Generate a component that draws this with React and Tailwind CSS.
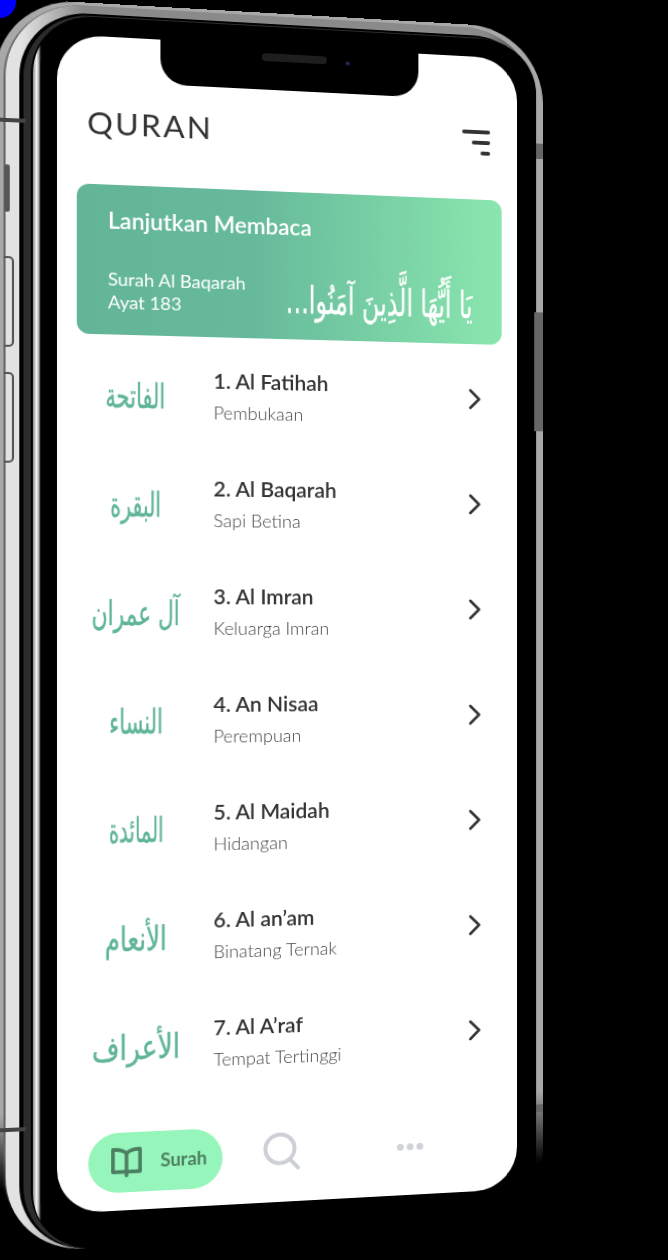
import React from "react";

function solve(A, b) {
  const n = b.length;
  const m = A.map((r, i) => [...r, b[i]]);
  for (let i = 0; i < n; i++) {
    let p = i;
    for (let k = i + 1; k < n; k++) if (Math.abs(m[k][i]) > Math.abs(m[p][i])) p = k;
    [m[i], m[p]] = [m[p], m[i]];
    for (let k = i + 1; k < n; k++) {
      const f = m[k][i] / m[i][i];
      for (let j = i; j <= n; j++) m[k][j] -= f * m[i][j];
    }
  }
  const x = new Array(n).fill(0);
  for (let i = n - 1; i >= 0; i--) {
    let s = m[i][n];
    for (let j = i + 1; j < n; j++) s -= m[i][j] * x[j];
    x[i] = s / m[i][i];
  }
  return x;
}

function matrixFor(src, dst) {
  const A = [];
  const b = [];
  src.forEach(([x, y], i) => {
    const [u, v] = dst[i];
    A.push([x, y, 1, 0, 0, 0, -x * u, -y * u]);
    b.push(u);
    A.push([0, 0, 0, x, y, 1, -x * v, -y * v]);
    b.push(v);
  });
  const [a, c, e, d, f, h, g, k] = solve(A, b);
  return `matrix3d(${a},${d},0,${g},${c},${f},0,${k},0,0,1,0,${e},${h},0,1)`;
}

const tilt = matrixFor(
  [[59, 33], [519, 33], [519, 1209], [59, 1209]],
  [[57, 34], [517, 59], [517, 1189], [57, 1214]]
);

const surahs = [
  ["الفاتحة", "1. Al Fatihah", "Pembukaan", "scale-x-[0.60]"],
  ["البقرة", "2. Al Baqarah", "Sapi Betina", "scale-x-[0.59]"],
  ["آل عمران", "3. Al Imran", "Keluarga Imran", "scale-x-[0.62]"],
  ["النساء", "4. An Nisaa", "Perempuan", "scale-x-[0.60]"],
  ["المائدة", "5. Al Maidah", "Hidangan", "scale-x-[0.56]"],
  ["الأنعام", "6. Al an’am", "Binatang Ternak", "scale-x-[0.70]"],
  ["الأعراف", "7. Al A’raf", "Tempat Tertinggi", "scale-x-[0.76]"],
];

const latin = "font-['Lato','Liberation_Sans',sans-serif]";
const arabic = "font-['DejaVu_Sans',sans-serif]";

function Row({ ar, title, sub, squeeze }) {
  return (
    <div className="flex h-[109px] items-center">
      <div className="w-[152px] pt-[3px] text-center" dir="rtl">
        <span className={`inline-block whitespace-nowrap text-[34px] leading-none text-[#5fb596] [-webkit-text-stroke:0.5px_#5fb596] ${arabic} ${squeeze}`}>{ar}</span>
      </div>
      <div className="flex-1">
        <div className="text-[21px] font-semibold leading-[28px] text-[#333]">{title}</div>
        <div className="mt-[4px] text-[18px] font-light leading-[28px] text-[#444]">{sub}</div>
      </div>
      <svg width="14" height="22" viewBox="0 0 14 22" className="mb-[5px] mr-[37px]" fill="none" stroke="#333" strokeWidth="2.8" strokeLinecap="round" strokeLinejoin="round">
        <path d="M2.5 2 L11.5 11 L2.5 20" />
      </svg>
    </div>
  );
}

export default function App() {
  return (
    <div className={`relative h-[1260px] w-[668px] overflow-hidden bg-black ${latin}`}>
      <div className="relative w-[546px] origin-top-left" style={{ transform: tilt }}>
        <div className="rounded-[78px] bg-[linear-gradient(to_bottom,#a8a8a8,#a8a8a8_89%,#000_95%)] pl-[8px] pr-[7px] pt-[3px]">
          <div className="rounded-[75px] bg-[linear-gradient(to_bottom,#666,#666_92%,#000_96%)] pl-[2px]">
            <div className="rounded-[74px] bg-[linear-gradient(to_right,#e2e2e2,#e2e2e2_3%,#8a8a8a_14%,#8a8a8a_90%,#333)] pl-[13px] pt-[8px]">
              <div className="rounded-[66px] bg-black pl-[4px] pt-[2px]">
                <div className="rounded-[64px] bg-[#2c2c2c] pl-[7px] pt-[1px]">
                  <div className="rounded-[60px] bg-black pl-[2px] pt-[1px]">
                    <div className="rounded-[58px] bg-[linear-gradient(to_right,#888,#f5f5f5_3.5px,#999_6px,#222_7px,#000_8px)] pl-[7px]">
                      <div className="rounded-[54px] bg-black pb-[36px] pl-[16px] pr-[20px] pt-[18px]">
                        <div className="relative h-[1176px] w-[460px] overflow-hidden rounded-[44px] bg-white">
                          <div className="absolute left-[100px] top-0 h-[45px] w-[258px] rounded-b-[26px] bg-black">
                            <div className="absolute left-[100px] top-[8px] h-[8px] w-[65px] rounded-full bg-[#1e1e1e]" />
                            <div className="absolute left-[184px] top-[12px] h-[4px] w-[4px] rounded-full bg-[#2a2a66]" />
                          </div>

                          <div className="flex h-[148px] items-center justify-between pl-[29px] pr-[28px] pt-[32px]">
                            <div className="-translate-y-[4px] text-[31px] font-normal leading-none tracking-[2.2px] text-[#333]">QURAN</div>
                            <div className="flex w-[30px] -translate-y-[1px] flex-col items-end gap-[7px]">
                              <div className="h-[4px] w-[29px] rounded-full bg-[#333]" />
                              <div className="h-[4px] w-[19px] rounded-full bg-[#333]" />
                              <div className="h-[4px] w-[10px] rounded-full bg-[#333]" />
                            </div>
                          </div>

                          <div className="ml-[19px] mr-[16px] h-[150px] rounded-[12px] bg-[linear-gradient(to_right,#64b598,#66b99b_40%,#8ae6ae)] pl-[30px] pr-[30px] pt-[21px] text-white">
                            <div className="text-[22.5px] font-semibold leading-[30px]">Lanjutkan Membaca</div>
                            <div className="mt-[32px] flex items-start justify-between">
                              <div className="text-[18px] leading-[23px]">
                                <div>Surah Al Baqarah</div>
                                <div>Ayat 183</div>
                              </div>
                              <div className="w-[190px] text-center" dir="rtl">
                                <span className={`inline-block translate-x-[39px] translate-y-[2px] whitespace-nowrap text-[34px] leading-[50px] [-webkit-text-stroke:0.3px_#fff] ${arabic} scale-x-[0.71] scale-y-[1.12]`}>يَا أَيُّهَا الَّذِينَ آمَنُوا...</span>
                              </div>
                            </div>
                          </div>

                          <div className="pt-[5px]">
                            {surahs.map(([ar, t, s, q]) => (
                              <Row key={t} ar={ar} title={t} sub={s} squeeze={q} />
                            ))}
                          </div>

                          <div className="mt-[32px] flex items-center pl-[30px]">
                            <div className="flex h-[60px] w-[131px] items-center rounded-full bg-[#96f5ba] pl-[22px]">
                              <svg width="30" height="34" viewBox="0 0 32 34" fill="none" stroke="#4c7f62" strokeWidth="3.8" strokeLinejoin="round" strokeLinecap="round">
                                <path d="M16 8 C14 4 9 3 2 3 V27 H16 C23 27 30 27 30 27 V3 C23 3 18 4 16 8 V31" />
                              </svg>
                              <div className="-mt-[2px] ml-[18px] text-[18px] font-bold text-[#4c7f62]">Surah</div>
                            </div>
                            <svg width="38" height="40" viewBox="0 0 38 40" className="-mt-[6px] ml-[40px]" fill="none" stroke="#cdd0d6" strokeWidth="4" strokeLinecap="round">
                              <circle cx="17" cy="17" r="14.5" />
                              <path d="M27 28 L35 37" />
                            </svg>
                            <div className="-mt-[3px] ml-[97px] flex gap-[3px]">
                              <div className="h-[7px] w-[7px] rounded-full bg-[#cfd2d8]" />
                              <div className="h-[7px] w-[7px] rounded-full bg-[#cfd2d8]" />
                              <div className="h-[7px] w-[7px] rounded-full bg-[#cfd2d8]" />
                            </div>
                          </div>
                        </div>
                      </div>
                    </div>
                  </div>
                </div>
              </div>
            </div>
          </div>
        </div>

        <div className="absolute left-[4px] top-[119px] h-[4px] w-[25px] bg-[#444]" />
        <div className="absolute left-[4px] top-[1121px] h-[4px] w-[25px] bg-[#444]" />
        <div className="absolute left-[9px] top-[165px] h-[47px] w-[5px] rounded-[2px] bg-[#555]" />
        <div className="absolute left-[8px] top-[256px] h-[90px] w-[10px] rounded-r-[5px] border-2 border-l-0 border-[#555]" />
        <div className="absolute left-[8px] top-[371px] h-[90px] w-[10px] rounded-r-[5px] border-2 border-l-0 border-[#555]" />
        <div className="absolute right-0 top-[120px] h-[16px] w-[7px] bg-[#666]" />
        <div className="absolute right-0 top-[296px] h-[124px] w-[9px] bg-[#666]" />
        <div className="absolute right-0 top-[1122px] h-[8px] w-[7px] bg-[#666]" />
      </div>
      <div className="absolute left-0 top-0 h-[18px] w-[16px] rounded-br-full bg-[#0000ff]" />
    </div>
  );
}
